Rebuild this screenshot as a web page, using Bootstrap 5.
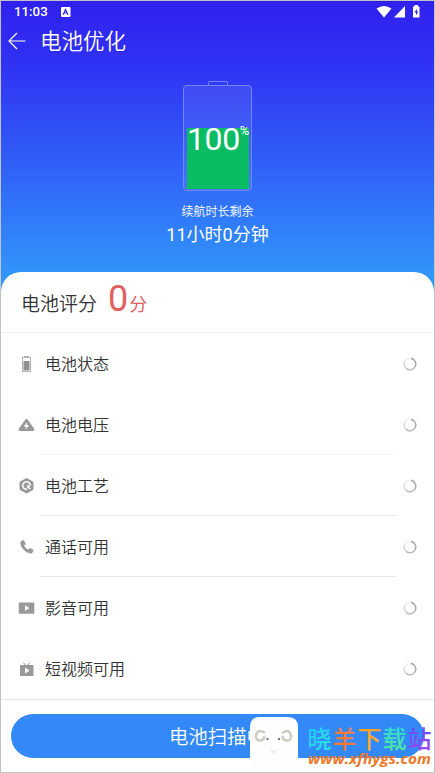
<!DOCTYPE html>
<html lang="zh-CN">
<head>
<meta charset="utf-8">
<meta name="viewport" content="width=device-width, initial-scale=1">
<title>电池优化</title>
<link href="https://cdn.jsdelivr.net/npm/bootstrap@5.3.0/dist/css/bootstrap.min.css" rel="stylesheet">
<style>
body{font-family:Roboto,"Noto Sans CJK SC",sans-serif;color:#333;line-height:1}
.screen{width:435px;height:773px;border:1px solid #c3c3c6;background:linear-gradient(#3020ee 0,#3031f3 60px,#3060f7 165px,#3195fb 272px)}
.status{height:21px;padding:1px 14px 0 13px;font-size:13.3px;font-weight:500}
.title-bar{height:38px;padding-left:7px;font-size:21.5px;font-weight:350}
.page-name{margin:2px 0 0 14px}
.hero{height:212px;padding-top:21px}
.cap{width:20px;height:4px;border:1px solid #7884fb;border-bottom:0;border-radius:2px 2px 0 0}
.cell{width:69px;height:106px;border:1.500px solid #7188fb;border-radius:4px;padding:2px 2px 1px 3px;background:rgba(255,255,255,.08)}
.charge{background:linear-gradient(transparent 40px,#0abc64 40px)}
.level{font-size:32px;padding-top:35px;white-space:nowrap;letter-spacing:-.4px}
.pct{font-size:13px;margin-top:1px;letter-spacing:0}
.remain{font-size:12px;margin-top:15px;font-weight:350}
.duration{font-size:18px;margin-top:8px;font-weight:400}
.sheet{border-radius:20px 20px 0 0}
.score{height:61px;padding:0 0 0 20px;border-bottom:1px solid #f4f4f4}
.score-name{font-size:19px;margin-top:5px;font-weight:350}
.score-num{font-size:36px;color:#e06060;margin-left:11px;margin-top:-7px}
.score-unit{font-size:18px;color:#e06060;margin:5px 0 0 1px;font-weight:400}
.entry{height:61px;padding:0 17px 0 17px;font-size:16px;font-weight:350}
.entry-name{margin-top:2px}
.entry-icon{width:17px;height:18px;margin-right:10px}
.rule{height:1px;margin:-1px 38px 0 39px;background:#e8e8e8}
.rule.faint{background:#f8f8f8}
.foot{height:73px;border-top:1px solid #e4e4e4;padding:14px 10px 0}
.scan{height:44px;background:#3489f8;border:0;font-size:19.400px;font-weight:350;line-height:1}
.scan span{position:relative;top:2px}
.brand{right:1px;bottom:0;width:186px;height:58px}
</style>
<script src="https://cdn.jsdelivr.net/npm/bootstrap@5.3.0/dist/js/bootstrap.bundle.min.js"></script>
</head>
<body>
<svg width="0" height="0" class="position-absolute"><defs>
<symbol id="spin" viewBox="0 0 14 14"><g fill="none" stroke-width="1.600"><path d="M7.800 1.400A5.700 5.700 0 0 1 12 9.800" stroke="#aaa"/><path d="M12 9.800A5.700 5.700 0 0 1 3.200 11.300" stroke="#bbb"/><path d="M3.200 11.300A5.700 5.700 0 0 1 2 4.300" stroke="#dcdcdc"/><path d="M2 4.300A5.700 5.700 0 0 1 6 1.400" stroke="#f0f0f0"/></g></symbol>
</defs></svg>
<main class="screen d-flex flex-column overflow-hidden position-relative">
  <div class="status d-flex align-items-center text-white">
    <span>11:03</span>
    <svg class="ms-2 me-auto" width="18" height="11" viewBox="0 0 18 11"><rect x="5" y="0" width="9.500" height="10" rx="1" fill="#fff"/><path d="M7.200 7.700 9.500 2.500l2.500 5.200M8 6h3" fill="none" stroke="#3020ee" stroke-width="1.200"/></svg>
    <svg width="46" height="14" viewBox="0 0 46 14" fill="#fff"><path d="M2.500 3.600Q10-1.400 17.500 3.600L10 12.500Z"/><path d="M31 1v11.500H20Z"/><path d="M39 1.500h1.500V0h3.500v1.500h1.500V12.500H39Z"/><path d="m43 3.500-2.500 4H42v3l2.300-4h-1.500Z" fill="#3020ee"/></svg>
  </div>
  <header class="title-bar d-flex align-items-center text-white">
    <svg width="18" height="18" viewBox="0 0 18 18" fill="none" stroke="#fff" stroke-width="1.200"><path d="M17.500 9H1M9 1 1 9l8 8"/></svg>
    <span class="page-name">电池优化</span>
  </header>
  <section class="hero d-flex flex-column align-items-center text-white">
    <div class="cap"></div>
    <div class="cell"><div class="charge h-100 overflow-hidden"><div class="level d-flex"><span>100</span><span class="pct">%</span></div></div></div>
    <div class="remain">续航时长剩余</div>
    <div class="duration">11小时0分钟</div>
  </section>
  <section class="sheet bg-white flex-grow-1 d-flex flex-column">
    <div class="score d-flex align-items-center"><span class="score-name">电池评分</span><span class="score-num">0</span><span class="score-unit">分</span></div>
    <div class="entry d-flex align-items-center"><svg class="entry-icon" viewBox="0 0 17 18"><path d="M6 1h5v1.500H6Z" fill="#aaa"/><rect x="4.500" y="2.500" width="8" height="14" fill="none" stroke="#b5b5b5"/><path d="M5.500 6h6v9.500h-6Z" fill="#919191"/></svg><span class="entry-name">电池状态</span><svg class="ms-auto" width="14" height="14"><use href="#spin"/></svg></div>
    <div class="entry d-flex align-items-center"><svg class="entry-icon" viewBox="0 0 17 18"><path d="M7.200 3.800Q8.500 1.800 9.800 3.800L16 12.500Q17 15 14.500 15H2.500Q0 15 1 12.500Z" fill="#999"/><path d="m9 6.500-3.500 4h2.300L7.500 13.500l3.800-4.500H9Z" fill="#fff"/></svg><span class="entry-name">电池电压</span><svg class="ms-auto" width="14" height="14"><use href="#spin"/></svg></div>
    <div class="rule faint"></div>
    <div class="entry d-flex align-items-center"><svg class="entry-icon" viewBox="0 0 17 18"><path d="m8.500 1.500 6.500 3.500v7.500l-6.500 3.500L2 12.500V5Z" fill="#999" stroke="#999" stroke-linejoin="round"/><path d="M9 12.300A3.800 3.800 0 1 1 12.300 8.700" fill="none" stroke="#fff" stroke-width="1.500"/><path d="m9 8 3.200 1-.8 1 1.300 1.500-1 1-1.500-1.500-1 .8Z" fill="#fff"/></svg><span class="entry-name">电池工艺</span><svg class="ms-auto" width="14" height="14"><use href="#spin"/></svg></div>
    <div class="rule"></div>
    <div class="entry d-flex align-items-center"><svg class="entry-icon" viewBox="0 0 17 18"><path d="M3.200 3.200 5 2.200q.8-.3 1.200.5L7.500 5.500q.2.800-.4 1.200L6 7.500q1.500 3 4 4.200l1.200-1.200q.6-.5 1.300-.2l2.500 1.300q.7.500.4 1.200l-1 1.900q-.5.900-1.500.8Q8.500 15 5 11 2 7.500 2.300 4.500 2.400 3.600 3.200 3.200Z" fill="#999"/></svg><span class="entry-name">通话可用</span><svg class="ms-auto" width="14" height="14"><use href="#spin"/></svg></div>
    <div class="rule"></div>
    <div class="entry d-flex align-items-center"><svg class="entry-icon" viewBox="0 0 17 18"><rect x=".8" y="3.500" width="15.500" height="11.200" rx=".6" fill="#999"/><path d="m7 6.300 4.500 2.800L7 11.900Z" fill="#fff"/></svg><span class="entry-name">影音可用</span><svg class="ms-auto" width="14" height="14"><use href="#spin"/></svg></div>
    <div class="entry d-flex align-items-center"><svg class="entry-icon" viewBox="0 0 17 18"><rect x="2" y="5" width="13.500" height="11" rx=".6" fill="#999"/><path d="m5.500 2.500 2 3m4-3-2 3" stroke="#999"/><path d="m7 7.500 4.500 3-4.500 3Z" fill="#fff"/></svg><span class="entry-name">短视频可用</span><svg class="ms-auto" width="14" height="14"><use href="#spin"/></svg></div>
    <div class="foot mt-auto"><button type="button" class="scan btn btn-primary rounded-pill w-100 p-0"><span>电池扫描中</span></button></div>
  </section>
  <svg class="brand position-absolute" viewBox="0 0 186 58">
    <defs>
      <linearGradient id="a" x2="1" y2="1"><stop stop-color="#1bc4ff"/><stop offset="1" stop-color="#30e8e0"/></linearGradient>
      <linearGradient id="b" x2="0" y2="1"><stop stop-color="#ef805a"/><stop offset="1" stop-color="#f57620"/></linearGradient>
      <linearGradient id="c" x2="0" y2="1"><stop stop-color="#f59a28"/><stop offset="1" stop-color="#ffb52a"/></linearGradient>
      <linearGradient id="d" x2="0" y2="1"><stop stop-color="#25dce1"/><stop offset="1" stop-color="#55e891"/></linearGradient>
      <linearGradient id="e" x2="0" y2="1"><stop stop-color="#5950f5"/><stop offset="1" stop-color="#a645ed"/></linearGradient>
    </defs>
    <path d="M3 54V13Q3 3 13 3H41Q51 3 51 13V54Z" fill="#fefefe"/>
    <g fill="none" stroke="#cfccc6" stroke-width="2.500"><path d="M18 19Q10 14 9 22Q9 28 15 26Q18 25 17 22"/><path d="M35 19Q43 14 44 22Q44 28 38 26Q35 25 36 22"/></g>
    <g fill="#555"><circle cx="20.500" cy="25" r="1.100"/><circle cx="32" cy="25" r="1.100"/></g>
    <path d="m24 36 2.500 2 2.500-2m-2.500 2v2" fill="none" stroke="#ddd"/>
    <g font-family="Noto Sans CJK SC" font-weight="500" font-size="24"><text x="60.500" y="33.500" fill="url(#a)">晓</text><text x="85.500" y="33.500" fill="url(#b)">羊</text><text x="110.500" y="33.500" fill="url(#c)">下</text><text x="135.500" y="33.500" fill="url(#d)">载</text><text x="160.500" y="33.500" fill="url(#e)">站</text></g>
    <text x="61" y="50" font-family="Open Sans, sans-serif" font-size="14" font-style="italic" font-weight="700" fill="#ec7928" textLength="123" lengthAdjust="spacingAndGlyphs">www.xfhygs.com</text>
  </svg>
</main>
</body>
</html>
